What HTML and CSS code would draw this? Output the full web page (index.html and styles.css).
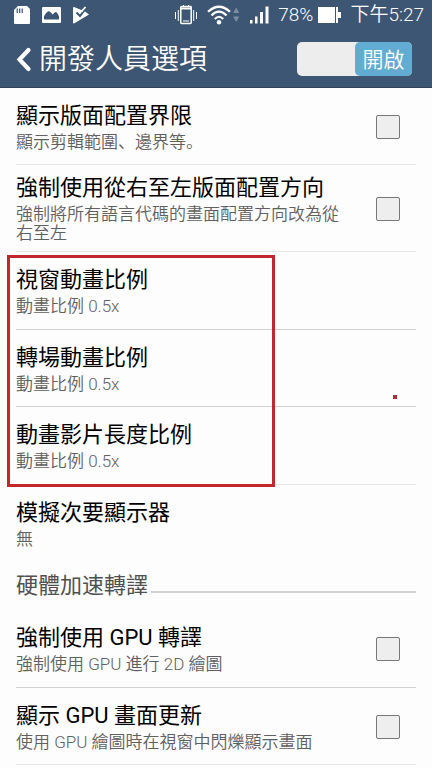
FILE: index.html
```html
<!DOCTYPE html>
<html lang="zh">
<head>
<meta charset="utf-8">
<meta name="viewport" content="width=device-width, initial-scale=1">
<title>開發人員選項</title>
<link rel="stylesheet" href="styles.css">
</head>
<body>
<header class="top">
  <div class="status">
    <div class="status-group status-left">
      <svg width="16" height="18" viewBox="0 0 16 18" aria-hidden="true"><path fill="#fff" d="M4 0h9l3 3v14q0 1-1 1H1q-1 0-1-1V4z"/><path stroke="#3c5673" stroke-width="1.2" d="M3.2 2.5v4.5M5.700 2.500v4.500M8.200 2.500v4.500"/></svg>
      <svg width="19" height="16" viewBox="0 0 19 16" aria-hidden="true"><path fill="#fff" fill-rule="evenodd" d="M1 0h17q1 0 1 1v14q0 1-1 1H1q-1 0-1-1V1q0-1 1-1zM2 12.500h15V9.500Q15 4.500 13.500 5L10.500 7.500Q8 4 6.500 4.200 4 5 2 9.500z"/></svg>
      <svg width="16" height="18" viewBox="0 0 16 18" aria-hidden="true"><path fill="#fff" d="M1 1l5 2 6 2.500 4 3L1 17.500q-1 0-1-1V2q0-1 1-1z"/><path fill="none" stroke="#3c5673" stroke-width="2" d="M3.500 6.500L7 10l7-9"/><path fill="none" stroke="#fff" stroke-width="1.800" d="M8.500 5.500L12.500 1"/></svg>
    </div>
    <div class="status-group status-right">
      <svg width="24" height="20" viewBox="0 0 24 20" aria-hidden="true"><path fill="none" stroke="#fff" stroke-width="1.500" d="M7.500 1.500h9q.7 0 .7.700v15.600q0 .7-.7.700h-9q-.7 0-.7-.7V2.200q0-.7.700-.7z"/><path stroke="#fff" stroke-width="2" d="M7 3.500h10"/><path stroke="#fff" stroke-width="1" d="M9.500 0v2M14.500 0v2M9 16h6M1.500 7v7M4.300 5v11M19.700 5v11M22.500 7v7"/></svg>
      <svg width="33" height="20" viewBox="0 0 33 20" aria-hidden="true"><g fill="none" stroke="#fff" stroke-width="2.200"><path d="M1 6.800Q12 -3.300 23 6.800"/><path d="M4.500 10.500Q12 3 19.500 10.500"/><path d="M7.800 14Q12 9.500 16.200 14"/></g><circle cx="12" cy="17.300" r="2.200" fill="#fff"/><path fill="#7d8ea3" d="M26.200 8l3-5.500 3 5.500zM26.200 11.500l3 5.500 3-5.500z"/></svg>
      <svg width="20" height="18" viewBox="0 0 20 18" aria-hidden="true"><path fill="#fff" d="M1 14h2.500v3.500H1zM6 10.500h2.500v7H6zM11 6h3v11.500h-3zM16.500.5h3v17h-3z"/></svg>
      <span class="battery">78%
        <svg width="23" height="16" viewBox="0 0 23 16" aria-hidden="true"><path fill="#fff" d="M0 0h17v16H0zM18 0h2v5h3v6h-3v5h-2z"/></svg>
      </span>
      <span class="clock">下午5:27</span>
    </div>
  </div>
  <div class="bar">
    <a class="back" href="#">
      <svg width="16" height="25" viewBox="0 0 16 25" aria-hidden="true"><path fill="none" stroke="#fff" stroke-width="4.200" stroke-linecap="round" stroke-linejoin="miter" d="M12.500 3L3.500 12.500 12.500 22"/></svg>
      <h1>開發人員選項</h1>
    </a>
    <button class="switch" type="button" role="switch" aria-checked="true"><span class="knob">開啟</span></button>
  </div>
</header>
<main>
  <label class="row">
    <span class="text"><span class="title">顯示版面配置界限</span><span class="sub">顯示剪輯範圍、邊界等。</span></span>
    <input class="check" type="checkbox">
  </label>
  <label class="row">
    <span class="text"><span class="title">強制使用從右至左版面配置方向</span><span class="sub">強制將所有語言代碼的畫面配置方向改為從右至左</span></span>
    <input class="check" type="checkbox">
  </label>
  <section class="marked">
    <button class="row tall dark" type="button"><span class="text"><span class="title">視窗動畫比例</span><span class="sub">動畫比例 0.5x</span></span></button>
    <button class="row dark" type="button"><span class="text"><span class="title">轉場動畫比例</span><span class="sub">動畫比例 0.5x</span></span></button>
    <button class="row tall" type="button"><span class="text"><span class="title">動畫影片長度比例</span><span class="sub">動畫比例 0.5x</span></span></button>
    <span class="frame"></span>
    <span class="dot"></span>
  </section>
  <button class="row last" type="button"><span class="text"><span class="title">模擬次要顯示器</span><span class="sub">無</span></span></button>
  <h2 class="section">硬體加速轉譯</h2>
  <label class="row tall dark">
    <span class="text"><span class="title">強制使用 GPU 轉譯</span><span class="sub">強制使用 GPU 進行 2D 繪圖</span></span>
    <input class="check" type="checkbox">
  </label>
  <label class="row">
    <span class="text"><span class="title">顯示 GPU 畫面更新</span><span class="sub">使用 GPU 繪圖時在視窗中閃爍顯示畫面</span></span>
    <input class="check" type="checkbox">
  </label>
</main>
</body>
</html>
```
FILE: styles.css
```css
* {
  box-sizing: border-box;
}

body {
  margin: 0;
  background: #fdfdfd;
  color: #000;
  font-family: Roboto, "Noto Sans CJK SC", sans-serif;
}

button {
  font: inherit;
  color: inherit;
}

.top {
  height: 88px;
  background: #3c5673;
  border-bottom: 1px solid #2f4258;
  color: #fff;
}

.status {
  display: flex;
  justify-content: space-between;
  align-items: center;
  height: 30px;
  padding: 0 8px 0 14px;
  font-size: 19px;
  font-weight: 350;
  line-height: 30px;
}

.status-group {
  display: flex;
  align-items: center;
}

.status-left {
  gap: 12px;
}

.status-right {
  gap: 9px;
}

.battery {
  display: flex;
  align-items: center;
  gap: 5px;
}

.bar {
  display: flex;
  justify-content: space-between;
  align-items: center;
  height: 58px;
  padding: 0 20px 0 16px;
}

.back {
  display: flex;
  align-items: center;
  gap: 7px;
  color: inherit;
  text-decoration: none;
}

h1 {
  margin: 2px 0 0;
  font-size: 28px;
  font-weight: 350;
  line-height: 40px;
}

.switch {
  display: flex;
  justify-content: flex-end;
  width: 115px;
  height: 34px;
  padding: 0;
  border: 0;
  border-radius: 5px;
  background: #ededed;
}

.knob {
  width: 57px;
  border-radius: 5px;
  background: #62acd3;
  color: #fff;
  font-size: 21px;
  font-weight: 350;
  line-height: 36px;
  height: 34px;
  text-align: center;
}

.row {
  display: flex;
  justify-content: space-between;
  align-items: center;
  width: calc(100% - 32px);
  min-height: 77px;
  margin: 0 16px;
  padding: 6px 16px 8px 0;
  border: 0;
  border-bottom: 1px solid #e6e6e6;
  background: none;
  text-align: left;
}

.tall {
  min-height: 78px;
}

.dark {
  border-bottom-color: #d0d0d0;
}

.last {
  border-bottom-color: transparent;
}

.text {
  flex: 1;
  padding-right: 26px;
}

.title,
.sub {
  display: block;
}

.title {
  font-size: 22px;
  line-height: 34px;
}

.sub {
  color: #606060;
  font-size: 17px;
  font-weight: 350;
  line-height: 19px;
}

.check {
  appearance: none;
  flex: none;
  width: 24px;
  height: 24px;
  margin: 3px 0 0;
  border: 1px solid #777;
  border-radius: 2px;
  background: #eee;
}

.marked {
  position: relative;
}

.frame {
  position: absolute;
  top: 3px;
  bottom: -2px;
  left: 7px;
  width: 268px;
  border: 3px solid #c1272d;
  pointer-events: none;
}

.dot {
  position: absolute;
  top: 143px;
  right: 35px;
  width: 4px;
  height: 4px;
  background: #b03038;
}

.section {
  display: flex;
  align-items: center;
  gap: 3px;
  margin: 0 16px;
  color: #505050;
  font-size: 22px;
  font-weight: 400;
  line-height: 48px;
}

.section::after {
  content: "";
  flex: 1;
  height: 2px;
  margin-top: 12px;
  background: #d0d0d0;
}
```
